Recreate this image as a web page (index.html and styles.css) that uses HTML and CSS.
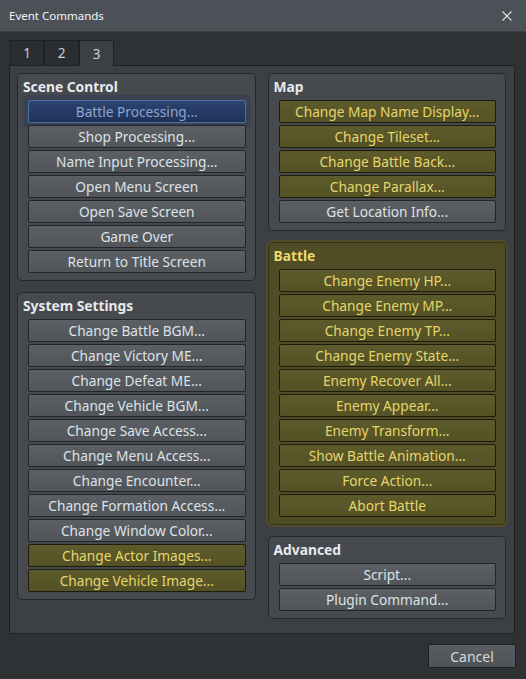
FILE: index.html
```html
<!DOCTYPE html>
<html>
<head>
<meta charset="utf-8">
<link rel="stylesheet" href="styles.css">
</head>
<body>
<div class="window">
  <div class="titlebar">
    <span class="title">Event Commands</span>
    <svg class="close" width="10" height="10" viewBox="0 0 10 10"><path d="M0.5 0.5 L9.5 9.5 M9.5 0.5 L0.5 9.5" stroke="#e6e8ea" stroke-width="1.1" fill="none"/></svg>
  </div>
  <div class="body">
    <div class="tabs">
      <div class="tab">1</div>
      <div class="tab">2</div>
      <div class="tab active">3</div>
    </div>
    <div class="pane">
      <div class="col">
        <div class="panel">
          <div class="ptitle">Scene Control</div>
          <div class="btn selected">Battle Processing...</div>
          <div class="btn">Shop Processing...</div>
          <div class="btn">Name Input Processing...</div>
          <div class="btn">Open Menu Screen</div>
          <div class="btn">Open Save Screen</div>
          <div class="btn">Game Over</div>
          <div class="btn">Return to Title Screen</div>
        </div>
        <div class="panel">
          <div class="ptitle">System Settings</div>
          <div class="btn">Change Battle BGM...</div>
          <div class="btn">Change Victory ME...</div>
          <div class="btn">Change Defeat ME...</div>
          <div class="btn">Change Vehicle BGM...</div>
          <div class="btn">Change Save Access...</div>
          <div class="btn">Change Menu Access...</div>
          <div class="btn">Change Encounter...</div>
          <div class="btn">Change Formation Access...</div>
          <div class="btn">Change Window Color...</div>
          <div class="btn olive">Change Actor Images...</div>
          <div class="btn olive">Change Vehicle Image...</div>
        </div>
      </div>
      <div class="col">
        <div class="panel">
          <div class="ptitle">Map</div>
          <div class="btn olive">Change Map Name Display...</div>
          <div class="btn olive">Change Tileset...</div>
          <div class="btn olive">Change Battle Back...</div>
          <div class="btn olive">Change Parallax...</div>
          <div class="btn">Get Location Info...</div>
        </div>
        <div class="panel battle">
          <div class="ptitle">Battle</div>
          <div class="btn olive">Change Enemy HP...</div>
          <div class="btn olive">Change Enemy MP...</div>
          <div class="btn olive">Change Enemy TP...</div>
          <div class="btn olive">Change Enemy State...</div>
          <div class="btn olive">Enemy Recover All...</div>
          <div class="btn olive">Enemy Appear...</div>
          <div class="btn olive">Enemy Transform...</div>
          <div class="btn olive">Show Battle Animation...</div>
          <div class="btn olive">Force Action...</div>
          <div class="btn olive">Abort Battle</div>
        </div>
        <div class="panel">
          <div class="ptitle">Advanced</div>
          <div class="btn">Script...</div>
          <div class="btn">Plugin Command...</div>
        </div>
      </div>
    </div>
    <div class="footer">
      <div class="cancel">Cancel</div>
    </div>
  </div>
</div>
</body>
</html>
```

FILE: styles.css
```css
* { box-sizing: border-box; }
html, body {
  margin: 0;
  padding: 0;
  width: 526px;
  height: 679px;
  overflow: hidden;
  background: #2f3235;
  font-family: "Noto Sans", "Open Sans", sans-serif;
  font-size: 13px;
}
.window {
  width: 526px;
  height: 679px;
  display: flex;
  flex-direction: column;
  background: #2f3235;
}
.titlebar {
  height: 31px;
  flex: none;
  background: #4b5157;
  display: flex;
  align-items: center;
  justify-content: space-between;
  padding: 0 14px 0 9px;
}
.title {
  color: #f2f4f6;
  font-size: 11.5px;
}
.close { display: block; }
.body {
  flex: 1;
  display: flex;
  flex-direction: column;
  background: #2f3235;
  border-top: 1px solid #3a3e42;
}
.tabs {
  display: flex;
  margin: 8px 0 -1px 10px;
  height: 26px;
  position: relative;
  z-index: 1;
}
.tab {
  width: 35px;
  height: 25px;
  background: #2b2e31;
  border: 1px solid #1f2123;
  border-bottom: none;
  color: #c9cdd1;
  display: flex;
  align-items: center;
  justify-content: center;
  font-size: 13.5px;
}
.tab:first-child { width: 34px; }
.tab.active {
  background: #3c3f43;
  height: 26px;
  border-color: #1f2123;
  color: #cfd3d7;
}
.pane {
  margin-left: 9px;
  width: 506px;
  height: 569px;
  background: #3c3f43;
  border: 1px solid #1f2123;
  padding: 7px 8px 0 7px;
  display: flex;
  gap: 12px;
}
.col {
  width: 239px;
  display: flex;
  flex-direction: column;
  gap: 11px;
}
.panel {
  background: #46494d;
  border: 1px solid #26282b;
  border-radius: 5px;
  padding: 0 9px 7px 10px;
}
.ptitle {
  height: 26px;
  margin-left: -5px;
  padding-top: 3px;
  font-weight: bold;
  color: #e6eaee;
  font-size: 13.8px;
  line-height: 19px;
}
.btn {
  height: 23px;
  margin-bottom: 2px;
  border: 1px solid #232528;
  border-radius: 2px;
  background: linear-gradient(#5c6065, #51555a);
  color: #dde2e7;
  display: flex;
  align-items: center;
  justify-content: center;
  white-space: nowrap;
  font-size: 13.7px;
}
.btn:last-child { margin-bottom: 0; }
.btn.selected {
  background: linear-gradient(#2d4472, #1f3157);
  border-color: #4b6ca4;
  color: #8ea5cc;
  box-shadow: 0 0 0 5px #3a4151;
}
.btn.olive {
  background: linear-gradient(#5d5a2b, #545126);
  border-color: #1e1d0b;
  color: #e5d66b;
}
.panel.battle {
  background: #4f4c26;
  border-color: #33311a;
  box-shadow: 0 0 0 2px #4f4c26;
}
.panel.battle .ptitle { color: #ead96e; }
.footer {
  display: flex;
  justify-content: flex-end;
  padding: 10px 10px 0 0;
}
.cancel {
  width: 88px;
  height: 24px;
  border: 1px solid #1f2124;
  border-radius: 2px;
  background: linear-gradient(#595d62, #4f5357);
  color: #d5d9dd;
  font-size: 14px;
  display: flex;
  align-items: center;
  justify-content: center;
}
```
